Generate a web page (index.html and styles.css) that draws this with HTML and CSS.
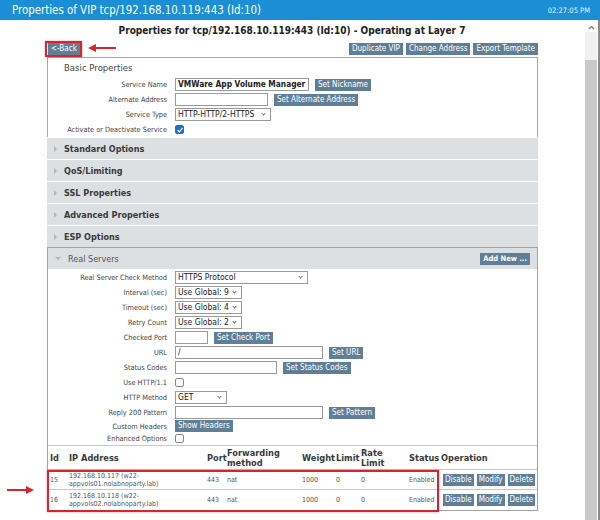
FILE: index.html
```html
<!DOCTYPE html>
<html>
<head>
<meta charset="utf-8">
<title>Properties of VIP</title>
<link rel="stylesheet" href="styles.css">
</head>
<body>
<div class="titlebar">
  <span class="title">Properties of VIP tcp/192.168.10.119:443 (Id:10)</span>
  <span class="clock">02:27:05 PM</span>
</div>
<div class="frame">
  <div class="content">
    <h1 class="heading">Properties for tcp/192.168.10.119:443 (Id:10) - Operating at Layer 7</h1>
    <div class="page">
      <div class="toolbar">
        <span class="btn back">&lt;-Back</span>
        <div class="toolbar-right">
          <span class="btn">Duplicate VIP</span>
          <span class="btn">Change Address</span>
          <span class="btn">Export Template</span>
        </div>
      </div>

      <div class="panel basic">
        <div class="panel-title">Basic Properties</div>
        <div class="form basic-form">
          <label>Service Name</label>
          <div class="ctl"><span class="input w-name bold">VMWare App Volume Manager</span><span class="btn">Set Nickname</span></div>
          <label>Alternate Address</label>
          <div class="ctl"><span class="input w-alt"></span><span class="btn">Set Alternate Address</span></div>
          <label>Service Type</label>
          <div class="ctl"><span class="select w-type">HTTP-HTTP/2-HTTPS<i class="chev"></i></span></div>
          <label>Activate or Deactivate Service</label>
          <div class="ctl"><span class="check on"><svg viewBox="0 0 10 10" width="8" height="8"><path d="M2 5.2 L4.2 7.4 L8.2 2.6" fill="none" stroke="#fff" stroke-width="1.6"/></svg></span></div>
        </div>
      </div>

      <div class="acc"><i class="tri"></i>Standard Options</div>
      <div class="acc"><i class="tri"></i>QoS/Limiting</div>
      <div class="acc"><i class="tri"></i>SSL Properties</div>
      <div class="acc"><i class="tri"></i>Advanced Properties</div>
      <div class="acc"><i class="tri"></i>ESP Options</div>

      <div class="section">
        <div class="section-head"><i class="tri down"></i><span class="section-name">Real Servers</span><span class="btn add">Add New ...</span></div>
        <div class="form rs">
          <label>Real Server Check Method</label>
          <div class="ctl"><span class="select w-method">HTTPS Protocol<i class="chev"></i></span></div>
          <label>Interval (sec)</label>
          <div class="ctl"><span class="select w-global">Use Global: 9<i class="chev"></i></span></div>
          <label>Timeout (sec)</label>
          <div class="ctl"><span class="select w-global">Use Global: 4<i class="chev"></i></span></div>
          <label>Retry Count</label>
          <div class="ctl"><span class="select w-global">Use Global: 2<i class="chev"></i></span></div>
          <label>Checked Port</label>
          <div class="ctl"><span class="input w-port"></span><span class="btn">Set Check Port</span></div>
          <label>URL</label>
          <div class="ctl"><span class="input w-url">/</span><span class="btn">Set URL</span></div>
          <label>Status Codes</label>
          <div class="ctl"><span class="input w-codes"></span><span class="btn">Set Status Codes</span></div>
          <label>Use HTTP/1.1</label>
          <div class="ctl"><span class="check"></span></div>
          <label>HTTP Method</label>
          <div class="ctl"><span class="select w-get">GET<i class="chev"></i></span></div>
          <label>Reply 200 Pattern</label>
          <div class="ctl"><span class="input w-url"></span><span class="btn">Set Pattern</span></div>
          <label>Custom Headers</label>
          <div class="ctl"><span class="btn">Show Headers</span></div>
          <label>Enhanced Options</label>
          <div class="ctl"><span class="check"></span></div>
        </div>

        <table class="servers">
          <colgroup>
            <col class="c-id"><col class="c-ip"><col class="c-port"><col class="c-fwd"><col class="c-wt"><col class="c-lim"><col class="c-rate"><col class="c-st"><col class="c-op">
          </colgroup>
          <thead>
            <tr><th>Id</th><th>IP Address</th><th>Port</th><th>Forwarding method</th><th>Weight</th><th>Limit</th><th>Rate Limit</th><th>Status</th><th>Operation</th></tr>
          </thead>
          <tbody>
            <tr><td>15</td><td>192.168.10.117 (w22-<br>appvols01.nolabnoparty.lab)</td><td>443</td><td>nat</td><td>1000</td><td>0</td><td>0</td><td>Enabled</td><td><div class="ops"><span class="btn">Disable</span><span class="btn">Modify</span><span class="btn">Delete</span></div></td></tr>
            <tr><td>16</td><td>192.168.10.118 (w22-<br>appvols02.nolabnoparty.lab)</td><td>443</td><td>nat</td><td>1000</td><td>0</td><td>0</td><td>Enabled</td><td><div class="ops"><span class="btn">Disable</span><span class="btn">Modify</span><span class="btn">Delete</span></div></td></tr>
          </tbody>
        </table>
      </div>
    </div>

    <!-- callouts drawn over the page -->
    <div class="mark mark-back"></div>
    <div class="mark mark-rows"></div>
    <svg class="arrow arrow-back" width="30" height="10" viewBox="0 0 30 10"><path d="M29 5 H7" stroke="#d9262c" stroke-width="2"/><path d="M1 5 L9 1 L9 9 Z" fill="#d9262c"/></svg>
    <svg class="arrow arrow-rows" width="28" height="10" viewBox="0 0 28 10"><path d="M0 5 H21" stroke="#d9262c" stroke-width="2"/><path d="M27 5 L19 1 L19 9 Z" fill="#d9262c"/></svg>
  </div>
  <div class="scrollbar">
    <div class="sb-up"><svg width="7" height="5" viewBox="0 0 7 5"><path d="M1 4 L3.5 1.5 L6 4" fill="none" stroke="#777" stroke-width="1.2"/></svg></div>
    <div class="sb-gap"></div>
    <div class="sb-thumb"></div>
  </div>
</div>
</body>
</html>
```
FILE: styles.css
```css
* { box-sizing: border-box; }

html, body {
  margin: 0;
  width: 600px;
  height: 520px;
  overflow: hidden;
  background: #fff;
  font-family: "DejaVu Sans Condensed", "DejaVu Sans", sans-serif;
  color: #333;
}

.titlebar {
  height: 20px;
  background: #1b8ed6;
  color: #fff;
  display: flex;
  align-items: center;
  justify-content: space-between;
  padding: 0 10px 0 12px;
}
.title { font-size: 11.4px; }
.clock { font-size: 7.5px; color: #e6f3fb; }

.frame {
  display: flex;
  height: 500px;
}

.content {
  position: relative;
  width: 584px;
}

.heading {
  margin: 0;
  padding-top: 5px;
  height: 22px;
  text-align: center;
  font-size: 10px;
  font-weight: bold;
  color: #222;
}

.page {
  margin-left: 47px;
  width: 491px;
}

.btn {
  display: inline-block;
  background: #5e7f97;
  color: #fff;
  font-size: 8px;
  line-height: 12px;
  height: 12px;
  padding: 0 3px;
  white-space: nowrap;
}

.toolbar {
  display: flex;
  justify-content: space-between;
  align-items: center;
  height: 12px;
  margin-top: 1px;
}
.toolbar-right { display: flex; gap: 3px; }
.back { margin-left: 1px; }

.panel {
  border: 1px solid #a9a9a9;
  border-bottom: 0;
  margin-top: 2px;
}
.basic { height: 80px; padding-top: 3px; }
.panel-title {
  font-size: 9.5px;
  line-height: 14px;
  color: #444;
  padding-left: 16px;
  height: 16px;
}

.form {
  display: grid;
  grid-template-columns: 119px 1fr;
  column-gap: 8px;
  align-items: center;
}
.basic-form { grid-template-rows: repeat(4, 15px); }
.form label {
  text-align: right;
  font-size: 7.3px;
  color: #444;
  white-space: nowrap;
}
.ctl { display: flex; align-items: center; gap: 6px; }

.input, .select {
  display: inline-block;
  height: 13px;
  border: 1px solid #9a9a9a;
  background: #fff;
  font-size: 8.5px;
  line-height: 11px;
  padding: 0 2px;
  color: #222;
  position: relative;
  white-space: nowrap;
}
.bold { font-weight: bold; font-size: 8.3px; }
.select { padding-right: 12px; }
.chev {
  position: absolute;
  right: 5px;
  top: 3px;
  width: 3px;
  height: 3px;
  border-right: 1px solid #777;
  border-bottom: 1px solid #777;
  transform: rotate(45deg);
}

.w-name { width: 134px; }
.w-alt { width: 93px; }
.w-type { width: 96px; }
.w-method { width: 133px; }
.w-global { width: 67px; }
.w-port { width: 33px; }
.w-url { width: 148px; }
.w-codes { width: 102px; }
.w-get { width: 52px; }

.check {
  display: inline-block;
  width: 9px;
  height: 9px;
  border: 1px solid #888;
  border-radius: 2px;
  background: #fff;
  position: relative;
}
.check.on {
  background: #1f6fd0;
  border-color: #1f6fd0;
}
.check.on svg { position: absolute; left: 0; top: 0; }

.acc {
  height: 21px;
  margin-top: 1px;
  background: #dde0e2;
  display: flex;
  align-items: center;
  font-size: 9px;
  font-weight: bold;
  color: #3a3a3a;
  padding-left: 7px;
}
.tri {
  display: inline-block;
  width: 0;
  height: 0;
  border-top: 3px solid transparent;
  border-bottom: 3px solid transparent;
  border-left: 3px solid #b5b5b5;
  margin-right: 7px;
}
.tri.down {
  border-left: 3px solid transparent;
  border-right: 3px solid transparent;
  border-top: 3px solid #b5b5b5;
  border-bottom: 0;
  margin-right: 7px;
}

.section {
  border: 1px solid #a0a4a6;
}
.section-head {
  height: 21px;
  background: #dde0e2;
  display: flex;
  align-items: center;
  padding: 0 7px 0 7px;
  font-size: 9px;
  color: #555;
}
.section-name { flex: 1; }
.add { font-weight: bold; font-size: 7.5px; }

.rs { grid-template-rows: 16px repeat(9, 15px) 12px 13px; }

.servers {
  width: 100%;
  border-collapse: collapse;
  table-layout: fixed;
}
.c-id { width: 19px; }
.c-ip { width: 138px; }
.c-port { width: 20px; }
.c-fwd { width: 75px; }
.c-wt { width: 34px; }
.c-lim { width: 25px; }
.c-rate { width: 48px; }
.c-st { width: 32px; }
.servers th {
  text-align: left;
  font-size: 9.2px;
  line-height: 10px;
  color: #3a3a3a;
  padding: 0 0 0 2px;
  height: 24px;
  border-top: 1px solid #c8c8c8;
  border-bottom: 1px solid #c8c8c8;
}
.servers td {
  font-size: 7px;
  line-height: 8px;
  color: #555;
  padding: 0 0 0 2px;
  height: 20px;
  border-bottom: 1px solid #c8c8c8;
  white-space: nowrap;
}
.servers tr:last-child td { border-bottom: 0; }
.ops { display: flex; align-items: center; gap: 3px; padding-left: 2px; }
.ops .btn { font-size: 8px; padding: 0 2px; }

.mark {
  position: absolute;
  border: 2px solid #d3262e;
  box-shadow: 0 0 2px rgba(211, 38, 46, 0.5);
}
.mark-back { left: 45px; top: 21px; width: 37px; height: 16px; }
.mark-rows { left: 47px; top: 450px; width: 392px; height: 42px; }

.arrow { position: absolute; }
.arrow-back { left: 87px; top: 23px; }
.arrow-rows { left: 7px; top: 465px; }

.scrollbar {
  width: 16px;
  display: flex;
  flex-direction: column;
  align-items: center;
  border-right: 2px solid #8a8a8a;
  background: #fff;
}
.sb-up { height: 10px; width: 12px; display: flex; justify-content: center; align-items: center; margin-top: 2px; }
.sb-gap { height: 28px; width: 12px; background: #f0f0f0; }
.sb-thumb { flex: 1; width: 12px; background: #c9c9c9; }
```
